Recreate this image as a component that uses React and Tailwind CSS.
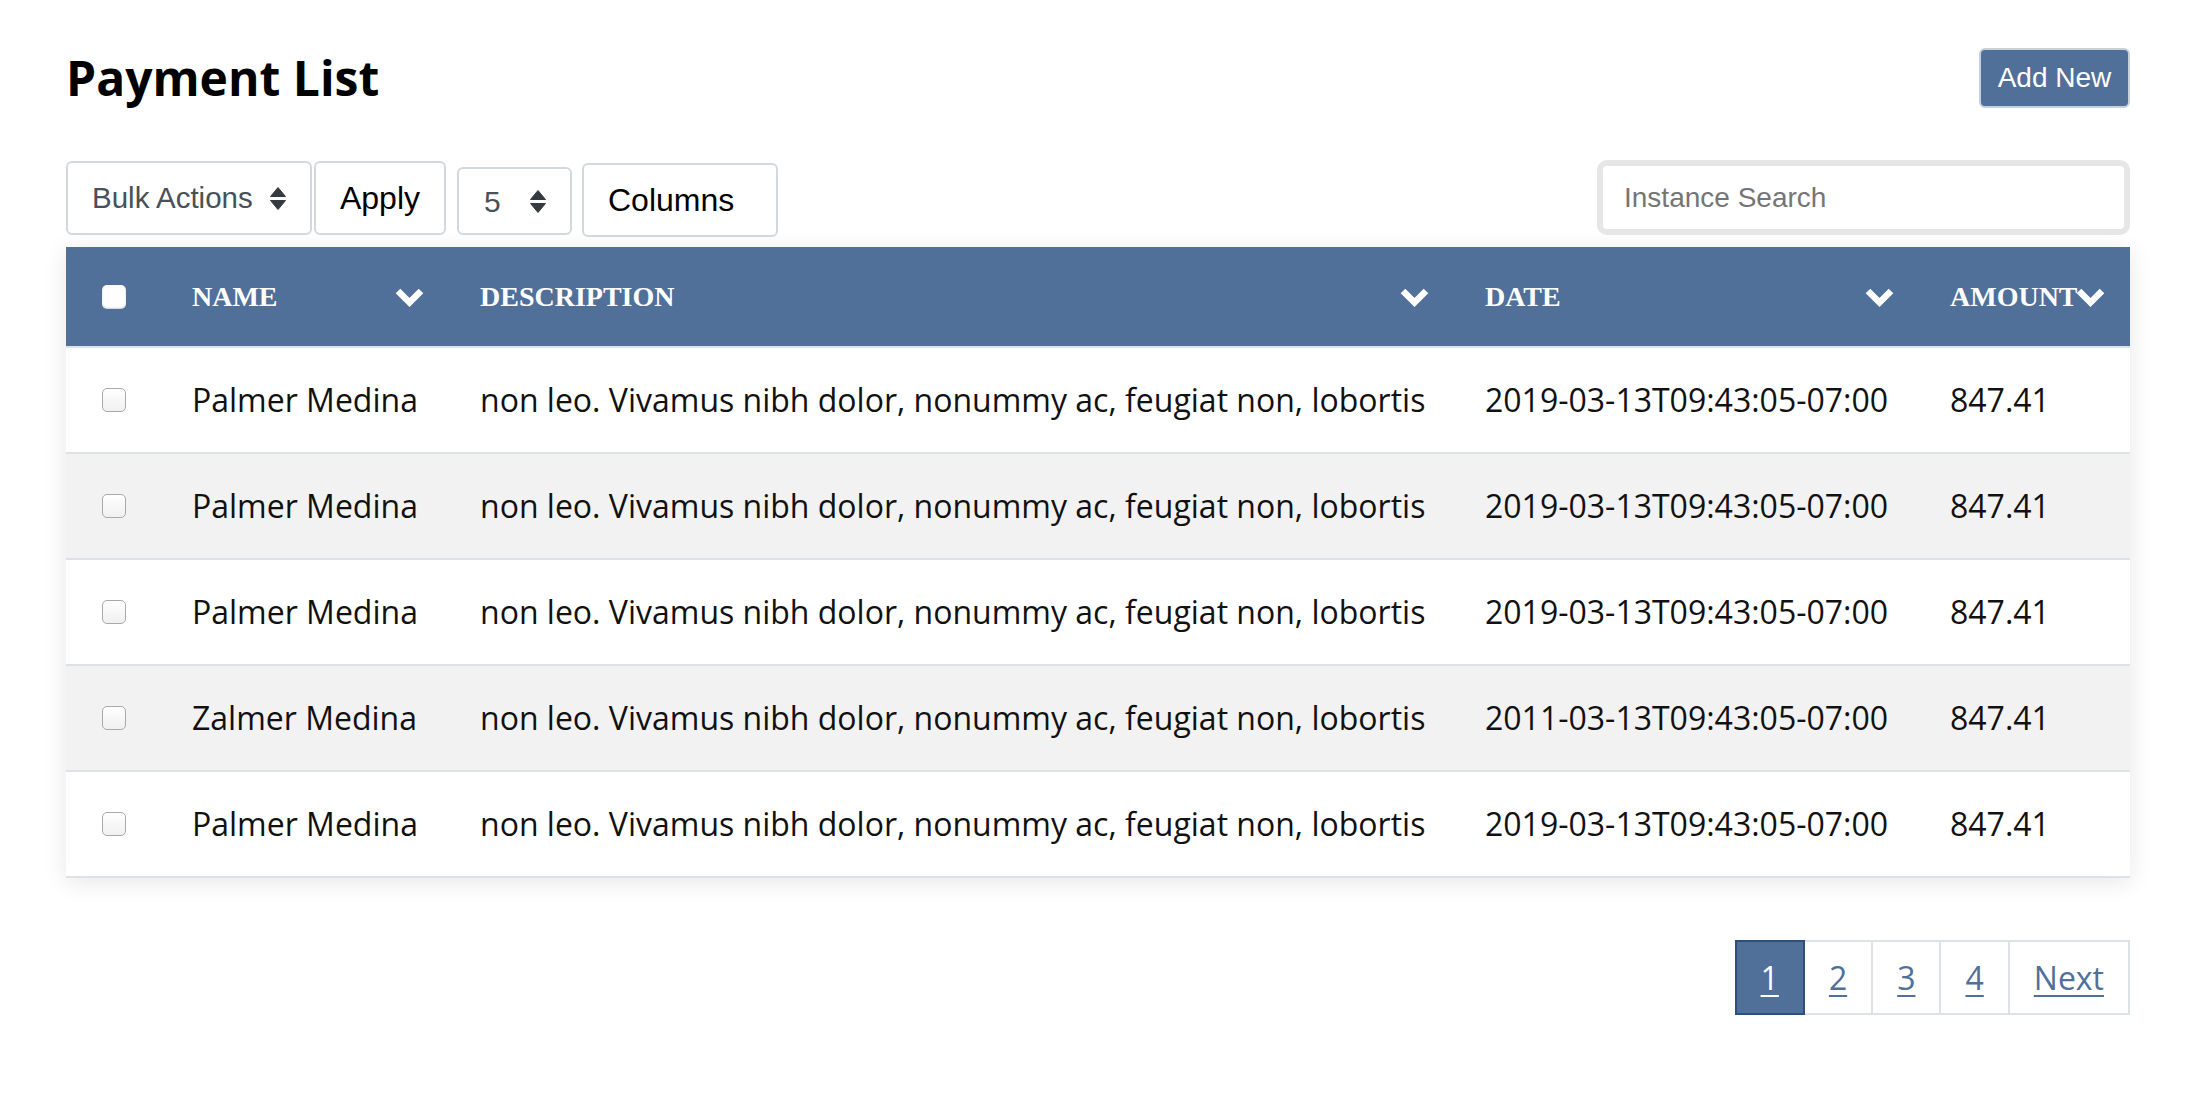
import React from "react";

const HEAD_BG = "bg-[#50709a]";

function Chevron() {
  return (
    <svg width="31" height="21" viewBox="0 0 31 21" className="absolute right-[24px] top-1/2 -translate-y-1/2">
      <polyline points="4,4.5 15.5,16 27,4.5" fill="none" stroke="white" strokeWidth="6.5" strokeLinecap="butt" strokeLinejoin="miter" />
    </svg>
  );
}

function Sort({ className }) {
  return (
    <svg width="16" height="23" viewBox="0 0 16 23" className={className}>
      <path d="M8 0.5 L15.5 9.5 L0.5 9.5 Z" fill="#343a40" strokeLinejoin="round" stroke="#343a40" strokeWidth="1" />
      <path d="M0.5 13.5 L15.5 13.5 L8 22.5 Z" fill="#343a40" strokeLinejoin="round" stroke="#343a40" strokeWidth="1" />
    </svg>
  );
}

const rows = [
  { name: "Palmer Medina", date: "2019-03-13T09:43:05-07:00" },
  { name: "Palmer Medina", date: "2019-03-13T09:43:05-07:00" },
  { name: "Palmer Medina", date: "2019-03-13T09:43:05-07:00" },
  { name: "Zalmer Medina", date: "2011-03-13T09:43:05-07:00" },
  { name: "Palmer Medina", date: "2019-03-13T09:43:05-07:00" },
];

const desc = "non leo. Vivamus nibh dolor, nonummy ac, feugiat non, lobortis";
const cols = "grid grid-cols-[95px_288px_1005px_465px_211px]";

export default function App() {
  const sans = { fontFamily: '"Liberation Sans", Arial, sans-serif' };
  return (
    <div className="min-h-[1100px] bg-white pl-[66px] pr-[76px] pt-[45px] text-black" style={{ fontFamily: '"Open Sans", sans-serif' }}>
      {/* Title row */}
      <div className="flex h-[65px] items-center justify-between">
        <h1 className="text-[48px] font-bold leading-[65px] text-black">Payment List</h1>
        <button
          className={`flex h-[60px] w-[151px] items-center justify-center rounded-[6px] border-2 border-[#c8d0da] ${HEAD_BG} text-[28px] text-white`}
          style={sans}
        >
          Add New
        </button>
      </div>

      {/* Toolbar */}
      <div className="mt-[50px] flex h-[77px] items-start justify-between" style={sans}>
        <div className="flex items-start">
          <div className="mt-[1px] flex h-[74px] w-[246px] items-center justify-between rounded-[6px] border-2 border-[#d3d8de] bg-white px-[24px] text-[29.5px] text-[#495057]">
            <span>Bulk Actions</span>
            <Sort />
          </div>
          <div className="ml-[2px] mt-[1px] flex h-[74px] w-[132px] items-center justify-center rounded-[6px] border-2 border-[#d3d8de] bg-white text-[32px] text-black">
            Apply
          </div>
          <div className="ml-[11px] mt-[7px] flex h-[68px] w-[115px] items-center justify-between rounded-[6px] border-2 border-[#d3d8de] bg-white px-[25px] text-[30px] text-[#495057]">
            <span>5</span>
            <Sort className="mr-[-1px]" />
          </div>
          <div className="ml-[10px] mt-[3px] flex h-[74px] w-[196px] items-center rounded-[6px] border-2 border-[#d3d8de] bg-white pl-[24px] text-[32px] text-black">
            Columns
          </div>
        </div>
        <div className="h-[75px] w-[533px] rounded-[10px] border-[6px] border-[#e6e6e6] bg-white">
          <input
            placeholder="Instance Search"
            className="h-full w-full rounded-[5px] bg-white pl-[21px] text-[28px] text-black outline-none placeholder:text-[#757575]"
            style={sans}
          />
        </div>
      </div>

      {/* Table */}
      <div className="mt-[10px] bg-white shadow-[0_4px_22px_rgba(0,0,0,0.10)]">
        <div className={`${cols} h-[101px] border-b-2 border-[#dee2e6] ${HEAD_BG} text-[28px] font-bold uppercase text-white`} style={{ fontFamily: '"Liberation Serif", "Times New Roman", serif' }}>
          <div className="flex items-center pl-[36px]">
            <span className="block h-[24px] w-[24px] rounded-[5px] bg-white shadow-[inset_0_-1px_2px_rgba(0,0,0,0.2)]" />
          </div>
          {["Name", "Description", "Date", "Amount"].map((h) => (
            <div key={h} className="relative flex items-center pl-[31px]">
              <span>{h}</span>
              <Chevron />
            </div>
          ))}
        </div>
        {rows.map((r, i) => (
          <div
            key={i}
            className={`${cols} h-[106px] border-b-2 border-[#dee2e6] text-[32px] text-[#111] ${i % 2 === 1 ? "bg-[#f2f2f2]" : "bg-white"}`}
          >
            <div className="flex items-center pl-[36px]">
              <span className="block h-[24px] w-[24px] rounded-[5px] border border-[#a9a9a9] bg-gradient-to-b from-white to-[#f0f0f0]" />
            </div>
            <div className="flex items-center whitespace-nowrap pl-[31px]">{r.name}</div>
            <div className="flex items-center whitespace-nowrap pl-[31px]">{desc}</div>
            <div className="flex items-center whitespace-nowrap pl-[31px]">{r.date}</div>
            <div className="flex items-center whitespace-nowrap pl-[31px]">847.41</div>
          </div>
        ))}
      </div>

      {/* Pagination */}
      <div className="mt-[62px] flex justify-end">
        <div className="flex text-[32px]">
          {["1", "2", "3", "4", "Next"].map((p, i) => (
            <a
              key={p}
              href="#"
              className={`flex h-[75px] items-center border-2 px-[24px] underline decoration-2 underline-offset-[5px] ${
                i === 0
                  ? "relative z-10 border-[#2b5080] bg-[#50709a] text-white"
                  : "-ml-[2px] border-[#dee2e6] bg-white text-[#50709a]"
              }`}
            >
              {p}
            </a>
          ))}
        </div>
      </div>
    </div>
  );
}
